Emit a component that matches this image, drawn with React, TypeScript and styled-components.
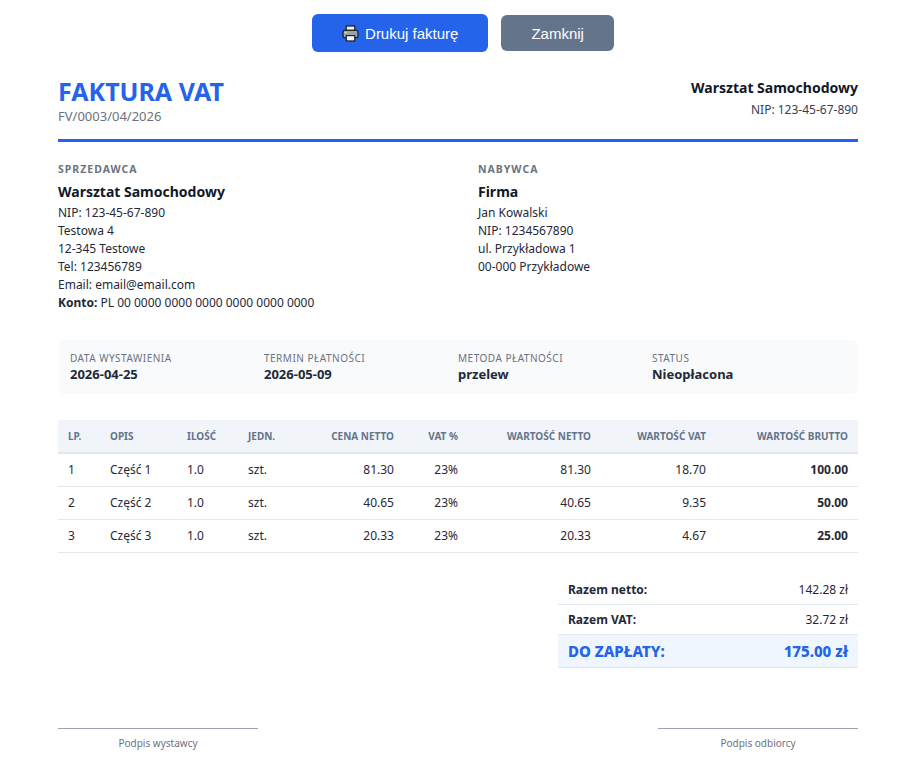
import React from 'react';
import styled, { createGlobalStyle } from 'styled-components';

const Global = createGlobalStyle`
  body {
    margin: 0;
    background: #fff;
    font-family: "Noto Sans", "Open Sans", sans-serif;
    color: #1f2937;
  }
  *, *::before, *::after { box-sizing: border-box; }
`;

const Page = styled.div`
  width: 800px;
  margin: 0 0 0 58px;
  padding: 14px 0 20px;
`;

const Toolbar = styled.div`
  display: flex;
  justify-content: center;
  align-items: center;
  gap: 13px;
  margin-bottom: 24px;
  padding-left: 10px;
`;

const Btn = styled.button<{ $primary?: boolean }>`
  display: flex;
  align-items: center;
  gap: 6px;
  border: none;
  border-radius: 6px;
  color: #fff;
  font-family: "Liberation Sans", Arial, sans-serif;
  font-size: 15px;
  height: ${(p) => (p.$primary ? '38px' : '36px')};
  padding: 0 30px;
  background: ${(p) => (p.$primary ? '#2563eb' : '#64748b')};
`;

const Header = styled.div`
  display: flex;
  justify-content: space-between;
  align-items: flex-start;
  padding-bottom: 14px;
  border-bottom: 3px solid #2563eb;
  margin-bottom: 20px;
`;

const Title = styled.h1`
  margin: 0;
  font-size: 25px;
  font-weight: 700;
  color: #2563eb;
  line-height: 30px;
`;

const Sub = styled.div`
  font-size: 13px;
  color: #6b7280;
  margin-top: 1px;
`;

const Company = styled.div`
  text-align: right;
  padding-top: 2px;
  > strong { display: block; font-size: 14px; color: #111827; }
  > span { font-size: 12px; color: #374151; }
`;

const Parties = styled.div`
  display: grid;
  grid-template-columns: 1fr 1fr;
  gap: 40px;
  margin-bottom: 28px;
`;

const Label = styled.div`
  font-size: 10.5px;
  font-weight: 700;
  letter-spacing: 1px;
  color: #6b7280;
  text-transform: uppercase;
  margin-bottom: 6px;
`;

const PartyName = styled.div`
  font-size: 14px;
  font-weight: 700;
  color: #111827;
  margin-bottom: 3px;
`;

const Line = styled.div`
  font-size: 12px;
  line-height: 18px;
  color: #1f2937;
  > b { font-weight: 700; }
`;

const InfoBox = styled.div`
  display: grid;
  grid-template-columns: repeat(4, 1fr);
  background: #f8fafc;
  border-radius: 6px;
  padding: 11px 12px;
  margin-bottom: 26px;
`;

const InfoLabel = styled.div`
  font-size: 10px;
  color: #6b7280;
  letter-spacing: 0.5px;
  text-transform: uppercase;
`;

const InfoValue = styled.div`
  font-size: 13px;
  font-weight: 700;
  color: #1f2937;
`;

const Table = styled.table`
  width: 800px;
  border-collapse: collapse;
  table-layout: fixed;
  margin-bottom: 22px;
`;

const Th = styled.th<{ $right?: boolean; $w: number }>`
  width: ${(p) => p.$w}px;
  background: #f1f5f9;
  font-size: 10px;
  font-weight: 700;
  color: #64748b;
  text-align: ${(p) => (p.$right ? 'right' : 'left')};
  padding: 9px 10px;
  border-bottom: 2px solid #e2e8f0;
`;

const Td = styled.td<{ $right?: boolean; $bold?: boolean }>`
  font-size: 12px;
  color: #1f2937;
  text-align: ${(p) => (p.$right ? 'right' : 'left')};
  font-weight: ${(p) => (p.$bold ? 700 : 400)};
  padding: 7px 10px;
  height: 33px;
  border-bottom: 1px solid #e2e8f0;
`;

const Summary = styled.div`
  width: 300px;
  margin-left: auto;
  margin-bottom: 60px;
`;

const SumRow = styled.div<{ $total?: boolean }>`
  display: flex;
  justify-content: space-between;
  align-items: center;
  padding: ${(p) => (p.$total ? '6px 10px' : '6px 10px')};
  border-bottom: 1px solid #e2e8f0;
  font-size: ${(p) => (p.$total ? '15px' : '12px')};
  background: ${(p) => (p.$total ? '#eff6ff' : 'transparent')};
  color: ${(p) => (p.$total ? '#2563eb' : '#1f2937')};
  font-weight: ${(p) => (p.$total ? 800 : 400)};
  > b { font-weight: 700; }
`;

const Signatures = styled.div`
  display: flex;
  justify-content: space-between;
`;

const Sign = styled.div`
  width: 200px;
  border-top: 1px solid #9ca3af;
  padding-top: 7px;
  text-align: center;
  font-size: 10px;
  color: #6b7280;
`;

const Printer = () => (
  <svg width="17" height="17" viewBox="0 0 16 16">
    <rect x="4" y="1" width="8" height="4" fill="#f3f4f6" stroke="#111" strokeWidth="1" />
    <rect x="1" y="5" width="14" height="7" rx="1.5" fill="#9ca3af" stroke="#111" strokeWidth="1" />
    <rect x="2.5" y="6.5" width="2" height="1" fill="#d9f99d" />
    <rect x="4" y="10" width="8" height="5" fill="#f3f4f6" stroke="#111" strokeWidth="1" />
  </svg>
);

const cols: [string, number, boolean][] = [
  ['LP.', 42, false], ['OPIS', 77, false], ['ILOŚĆ', 61, false], ['JEDN.', 62, false],
  ['CENA NETTO', 104, true], ['VAT %', 64, true], ['WARTOŚĆ NETTO', 133, true],
  ['WARTOŚĆ VAT', 115, true], ['WARTOŚĆ BRUTTO', 142, true],
];

const items = [
  ['1', 'Część 1', '1.0', 'szt.', '81.30', '23%', '81.30', '18.70', '100.00'],
  ['2', 'Część 2', '1.0', 'szt.', '40.65', '23%', '40.65', '9.35', '50.00'],
  ['3', 'Część 3', '1.0', 'szt.', '20.33', '23%', '20.33', '4.67', '25.00'],
];

export default function App() {
  return (
    <>
      <Global />
      <Page>
        <Toolbar>
          <Btn $primary><Printer />Drukuj fakturę</Btn>
          <Btn>Zamknij</Btn>
        </Toolbar>
        <Header>
          <div>
            <Title>FAKTURA VAT</Title>
            <Sub>FV/0003/04/2026</Sub>
          </div>
          <Company>
            <strong>Warsztat Samochodowy</strong>
            <span>NIP: 123-45-67-890</span>
          </Company>
        </Header>
        <Parties>
          <div>
            <Label>Sprzedawca</Label>
            <PartyName>Warsztat Samochodowy</PartyName>
            <Line>NIP: 123-45-67-890</Line>
            <Line>Testowa 4</Line>
            <Line>12-345 Testowe</Line>
            <Line>Tel: 123456789</Line>
            <Line>Email: email@email.com</Line>
            <Line><b>Konto:</b> PL 00 0000 0000 0000 0000 0000 0000</Line>
          </div>
          <div>
            <Label>Nabywca</Label>
            <PartyName>Firma</PartyName>
            <Line>Jan Kowalski</Line>
            <Line>NIP: 1234567890</Line>
            <Line>ul. Przykładowa 1</Line>
            <Line>00-000 Przykładowe</Line>
          </div>
        </Parties>
        <InfoBox>
          <div><InfoLabel>Data wystawienia</InfoLabel><InfoValue>2026-04-25</InfoValue></div>
          <div><InfoLabel>Termin płatności</InfoLabel><InfoValue>2026-05-09</InfoValue></div>
          <div><InfoLabel>Metoda płatności</InfoLabel><InfoValue>przelew</InfoValue></div>
          <div><InfoLabel>Status</InfoLabel><InfoValue>Nieopłacona</InfoValue></div>
        </InfoBox>
        <Table>
          <thead>
            <tr>
              {cols.map(([t, w, r]) => (
                <Th key={t} $w={w} $right={r}>{t}</Th>
              ))}
            </tr>
          </thead>
          <tbody>
            {items.map((row) => (
              <tr key={row[0]}>
                {row.map((v, i) => (
                  <Td key={i} $right={cols[i][2]} $bold={i === 8}>{v}</Td>
                ))}
              </tr>
            ))}
          </tbody>
        </Table>
        <Summary>
          <SumRow><b>Razem netto:</b><span>142.28 zł</span></SumRow>
          <SumRow><b>Razem VAT:</b><span>32.72 zł</span></SumRow>
          <SumRow $total><span>DO ZAPŁATY:</span><span>175.00 zł</span></SumRow>
        </Summary>
        <Signatures>
          <Sign>Podpis wystawcy</Sign>
          <Sign>Podpis odbiorcy</Sign>
        </Signatures>
      </Page>
    </>
  );
}
